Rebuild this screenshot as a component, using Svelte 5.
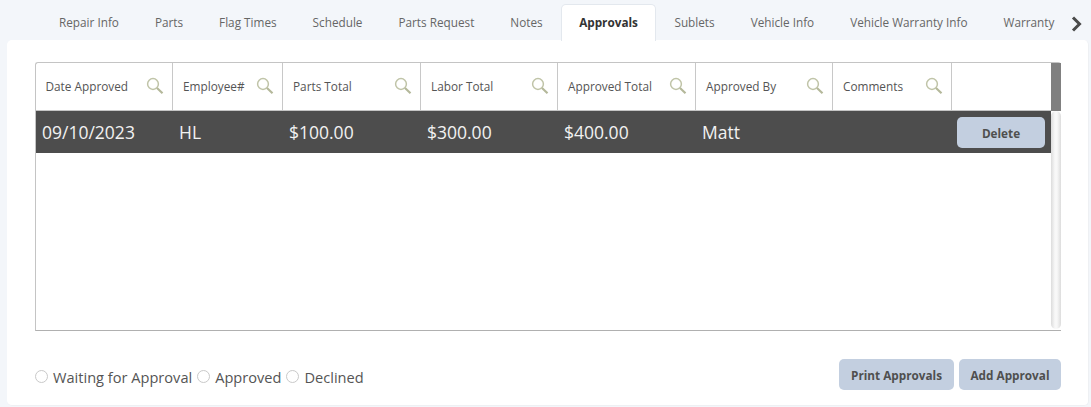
<script>
	const tabs = ['Repair Info', 'Parts', 'Flag Times', 'Schedule', 'Parts Request', 'Notes', 'Approvals', 'Sublets', 'Vehicle Info', 'Vehicle Warranty Info', 'Warranty'];
	const columns = [
		{ label: 'Date Approved', width: 137, value: '09/10/2023' },
		{ label: 'Employee#', width: 110, value: 'HL' },
		{ label: 'Parts Total', width: 138, value: '$100.00' },
		{ label: 'Labor Total', width: 137, value: '$300.00' },
		{ label: 'Approved Total', width: 138, value: '$400.00' },
		{ label: 'Approved By', width: 137, value: 'Matt' },
		{ label: 'Comments', width: 119, value: '' }
	];
	const statuses = ['Waiting for Approval', 'Approved', 'Declined'];
</script>

<div class="page">
	<div class="tabbar">
		<div class="tabs">
			{#each tabs as tab}
				<div class="tab" class:active={tab === 'Approvals'}>{tab}</div>
			{/each}
		</div>
		<svg class="next" width="12" height="16" viewBox="0 0 12 16">
			<path d="M2 1.5 L8.5 8 L2 14.5" fill="none" stroke="#4a4a4a" stroke-width="3" />
		</svg>
	</div>

	<div class="panel">
		<div class="grid">
			<div class="head">
				{#each columns as col}
					<div class="hcell" style="width: {col.width}px">
						<span>{col.label}</span>
						<svg class="search" width="18" height="18" viewBox="0 0 18 18">
							<circle cx="7" cy="7" r="5.4" fill="none" stroke="#c0c4a8" stroke-width="1.5" />
							<path d="M11 11 L16.5 16.2" stroke="#b4b89a" stroke-width="2.2" />
						</svg>
					</div>
				{/each}
				<div class="hcell last"></div>
				<div class="thumb"></div>
			</div>
			<div class="body">
				<div class="rows">
					<div class="row">
						{#each columns as col}
							<div class="cell" style="width: {col.width}px">{col.value}</div>
						{/each}
						<button class="btn del">Delete</button>
					</div>
				</div>
				<div class="track"></div>
			</div>
		</div>

		<div class="footer">
			<div class="radios">
				{#each statuses as status}
					<label><span class="radio"></span>{status}</label>
				{/each}
			</div>
			<div class="actions">
				<button class="btn">Print Approvals</button>
				<button class="btn">Add Approval</button>
			</div>
		</div>
	</div>
</div>

<style>
	:global(body) {
		margin: 0;
		background: #f3f6fa;
		font-family: 'Open Sans', sans-serif;
	}

	.page {
		height: 407px;
		overflow: hidden;
	}

	.tabbar {
		display: flex;
		height: 40px;
		padding-left: 41px;
		position: relative;
		z-index: 1;
	}

	.tabs {
		display: flex;
		padding-top: 4px;
		height: 37px;
		width: 1024px;
		overflow: hidden;
		flex: none;
	}

	.tab {
		padding: 0 18px;
		line-height: 37px;
		font-size: 11.75px;
		color: #666;
		white-space: nowrap;
		box-sizing: border-box;
		height: 37px;
	}

	.tab.active {
		background: #fff;
		color: #333;
		font-weight: 700;
		border: 1px solid #e3e8ee;
		border-bottom: none;
		border-radius: 5px 5px 0 0;
		padding: 0 17.5px;
		line-height: 35px;
	}

	.next {
		margin: 16px 0 0 6px;
	}

	.panel {
		margin-left: 7px;
		width: 1082px;
		height: 366px;
		box-sizing: border-box;
		background: #fff;
		border: 1px solid #eef0f3;
		border-top: none;
		border-left: none;
		border-radius: 5px;
		padding: 22px 28px 0 28px;
	}

	.grid {
		width: 1026px;
		height: 269px;
		box-sizing: border-box;
		border: 1px solid #c4c4c4;
		border-bottom-color: #b0b0b0;
		border-right: none;
		border-radius: 3px 3px 0 0;
		display: flex;
		flex-direction: column;
	}

	.head {
		display: flex;
		height: 48px;
		flex: none;
		border-bottom: 1px solid #c4c4c4;
		box-sizing: border-box;
		position: relative;
	}

	.hcell {
		display: flex;
		box-sizing: border-box;
		border-right: 1px solid #c8c8c8;
		font-size: 11.8px;
		color: #555;
		padding: 0 10px;
		position: relative;
		line-height: 47px;
	}

	.hcell:first-child {
		padding-left: 9.5px;
	}

	.hcell.last {
		border-right: none;
		flex: 1;
	}

	.search {
		position: absolute;
		right: 8px;
		top: 14px;
	}

	.thumb {
		position: absolute;
		right: 0;
		top: 0;
		width: 10px;
		height: 48px;
		background: #808080;
	}

	.body {
		display: flex;
		flex: 1;
		min-height: 0;
	}

	.rows {
		flex: 1;
	}

	.row {
		display: flex;
		align-items: center;
		height: 42px;
		background: #4d4d4d;
		color: #f2f2f2;
		font-size: 17.5px;
		position: relative;
	}

	.cell {
		box-sizing: border-box;
		padding-left: 6px;
		white-space: nowrap;
	}

	.track {
		width: 10px;
		flex: none;
		margin-bottom: 1px;
		background: linear-gradient(to right, #dcdcdc, #f8f8f8 40%, #f8f8f8 60%, #dcdcdc);
		border-radius: 5px;
	}

	.btn {
		border: none;
		border-radius: 5px;
		background: #c3cfe0;
		color: #4f4f4f;
		font-family: inherit;
		font-size: 11.75px;
		font-weight: 700;
		height: 31px;
		padding: 0 11.5px;
	}

	.actions .btn:first-child {
		padding: 0 12px;
	}

	.del {
		position: absolute;
		right: 6px;
		top: 6px;
		width: 88px;
		padding: 0;
	}

	.footer {
		display: flex;
		justify-content: space-between;
		margin-top: 28px;
		width: 1026px;
	}

	.radios {
		display: flex;
		gap: 5px;
		padding-top: 8px;
	}

	label {
		display: flex;
		align-items: center;
		font-size: 14.6px;
		color: #555;
		gap: 5px;
		line-height: 20px;
		height: 20px;
	}

	.radio {
		width: 13px;
		height: 13px;
		box-sizing: border-box;
		border: 1px solid #c9c9c9;
		border-radius: 50%;
		background: #fff;
		margin-top: -1px;
	}

	.actions {
		display: flex;
		gap: 5px;
	}
</style>
